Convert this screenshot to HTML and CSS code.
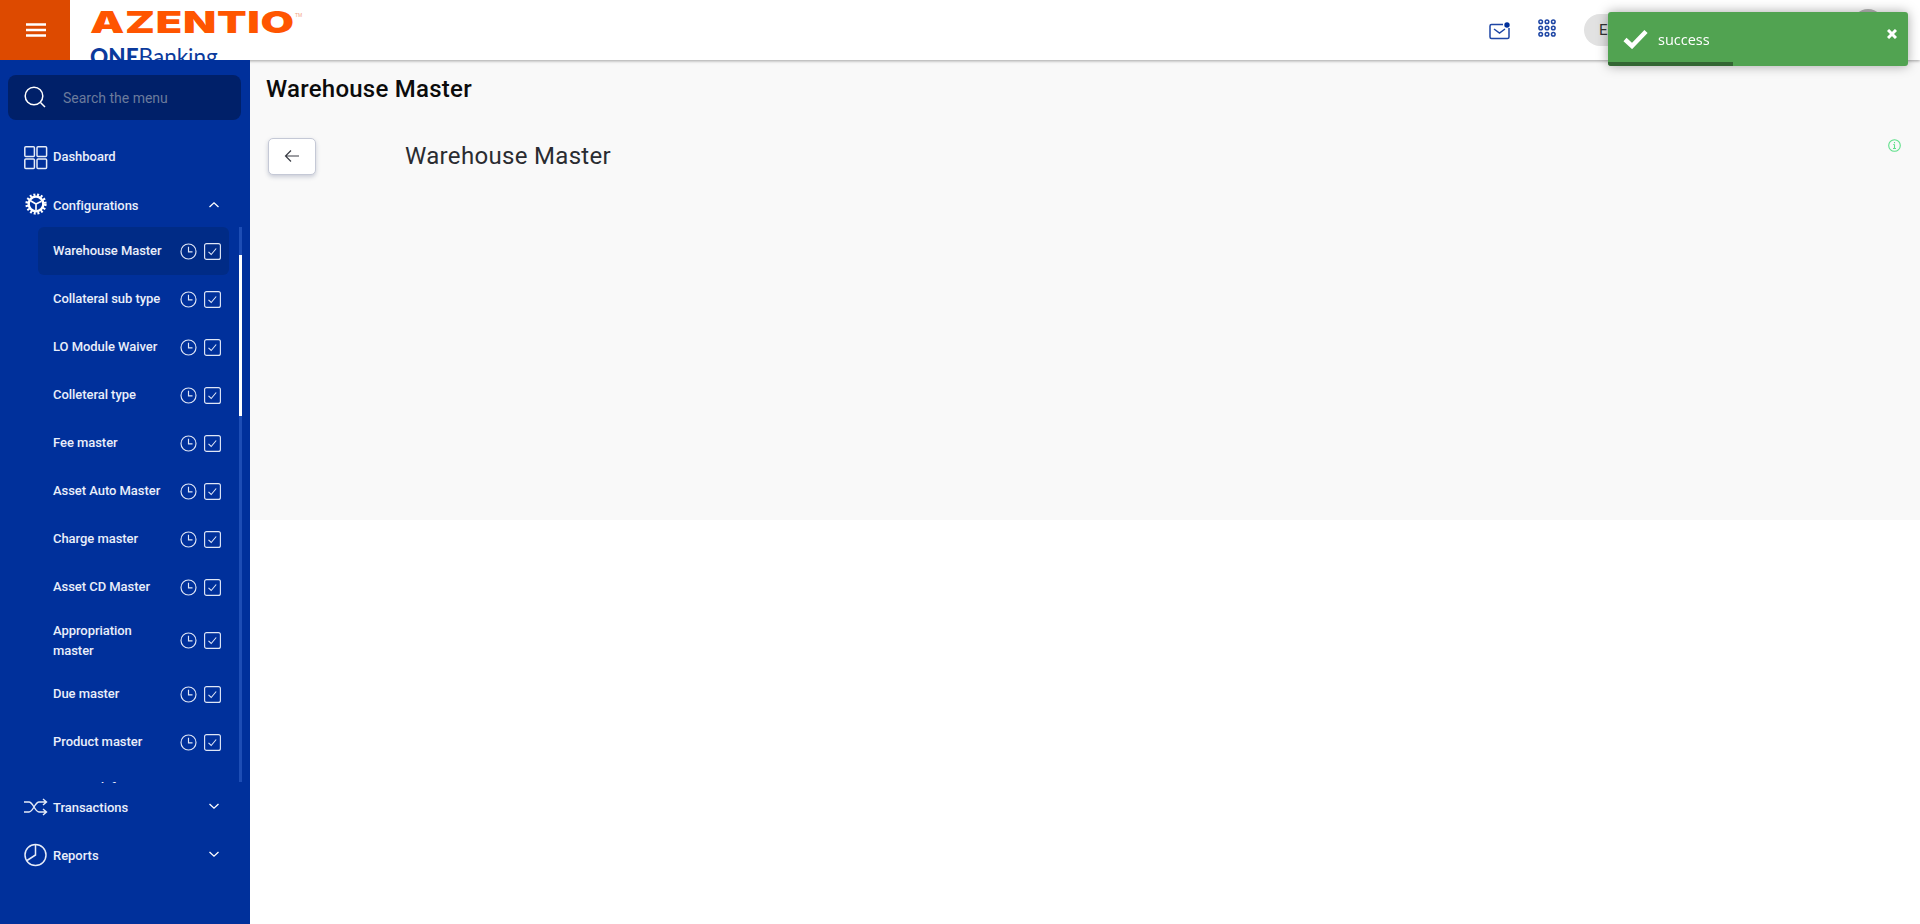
FILE: index.html
```html
<!DOCTYPE html>
<html lang="en">
<head>
<meta charset="utf-8">
<title>Warehouse Master</title>
<link rel="stylesheet" href="styles.css">
</head>
<body>
<svg class="sprite" aria-hidden="true">
  <symbol id="clock" viewBox="0 0 17 17"><circle cx="8.500" cy="8.500" r="7.500" fill="none" stroke="#dfe6f6" stroke-width="1.150"/><path d="M8.500 3.800v5h4" fill="none" stroke="#dfe6f6" stroke-width="1.150"/></symbol>
  <symbol id="check" viewBox="0 0 17 17"><rect x=".6" y=".6" width="15.800" height="15.800" rx="2" fill="none" stroke="#dfe6f6" stroke-width="1.150"/><path d="M4.500 8.800l2.700 2.700 5-6" fill="none" stroke="#dfe6f6" stroke-width="1.100"/></symbol>
</svg>
<header class="topbar">
  <button class="burger" aria-label="Menu">
    <svg width="20" height="14" viewBox="0 0 20 14"><path d="M0 1.500h20M0 7h20M0 12.500h20" stroke="#fff" stroke-width="2.500"/></svg>
  </button>
  <div class="brand">
    <div class="brand-main"><span class="brand-word">AZENTIO</span><span class="brand-tm">TM</span></div>
    <div class="brand-sub"><b>ONE</b>Banking</div>
  </div>
  <div class="top-actions">
    <svg class="ic-mail" width="22" height="20" viewBox="0 0 22 20" fill="none"><path d="M14 4.500H2.500A1.500 1.500 0 0 0 1 6v11a1.500 1.500 0 0 0 1.500 1.500h16A1.500 1.500 0 0 0 20 17V8" stroke="#1e46a5" stroke-width="1.500"/><path d="M5 9l5.500 4L16 9" stroke="#1e46a5" stroke-width="1.500"/><circle cx="18" cy="5" r="2.700" fill="#00309b"/></svg>
    <svg class="ic-grid" width="18" height="18" viewBox="0 0 20 20" fill="none" stroke="#1e46a5" stroke-width="1.700"><circle cx="3" cy="3" r="2"/><circle cx="10" cy="3" r="2"/><circle cx="17" cy="3" r="2"/><circle cx="3" cy="10" r="2"/><circle cx="10" cy="10" r="2"/><circle cx="17" cy="10" r="2"/><circle cx="3" cy="17" r="2"/><circle cx="10" cy="17" r="2"/><circle cx="17" cy="17" r="2"/></svg>
    <div class="lang">En</div>
    <div class="avatar"></div>
  </div>
</header>

<div class="shell">
  <aside class="sidebar">
    <div class="search">
      <svg width="22" height="23" viewBox="0 0 22 23" fill="none" stroke="#fff" stroke-width="1.500"><circle cx="10" cy="10" r="8.800"/><path d="M16.500 16.500l4.500 4.500"/></svg>
      <span>Search the menu</span>
    </div>
    <nav class="menu">
      <a class="top-item">
        <svg class="top-ic ic-dash" width="24" height="24" viewBox="0 0 24 24" fill="none" stroke="#e6ecf8" stroke-width="1.500"><rect x=".8" y=".8" width="9.600" height="9.600" rx="1"/><rect x="13" y=".8" width="9.600" height="9.600" rx="1"/><rect x=".8" y="13" width="9.600" height="9.600" rx="1"/><rect x="13" y="13" width="9.600" height="9.600" rx="1"/></svg>
        <span>Dashboard</span>
      </a>
      <a class="top-item open">
        <svg class="top-ic ic-gear" width="22" height="22" viewBox="0 0 24 24" fill="none" stroke="#fff"><circle cx="12" cy="12" r="8" stroke-width="2.600"/><circle cx="12" cy="12" r="10" stroke-width="3.200" stroke-dasharray="2.100 1.900"/><path d="M12 12L6 8.500M12 12l6-3M12 12v7" stroke-width="1.800"/></svg>
        <span>Configurations</span>
        <svg class="chev" width="12" height="8" viewBox="0 0 12 8" fill="none" stroke="#fff" stroke-width="1.300"><path d="M1.500 6L6 1.800 10.500 6"/></svg>
      </a>
      <div class="sub-wrap">
        <div class="sub">
          <a class="sub-item active"><span class="sub-label">Warehouse Master</span><span class="sub-ics"><svg width="17" height="17"><use href="#clock"/></svg><svg width="17" height="17"><use href="#check"/></svg></span></a>
          <a class="sub-item"><span class="sub-label">Collateral sub type</span><span class="sub-ics"><svg width="17" height="17"><use href="#clock"/></svg><svg width="17" height="17"><use href="#check"/></svg></span></a>
          <a class="sub-item"><span class="sub-label">LO Module Waiver</span><span class="sub-ics"><svg width="17" height="17"><use href="#clock"/></svg><svg width="17" height="17"><use href="#check"/></svg></span></a>
          <a class="sub-item"><span class="sub-label">Colleteral type</span><span class="sub-ics"><svg width="17" height="17"><use href="#clock"/></svg><svg width="17" height="17"><use href="#check"/></svg></span></a>
          <a class="sub-item"><span class="sub-label">Fee master</span><span class="sub-ics"><svg width="17" height="17"><use href="#clock"/></svg><svg width="17" height="17"><use href="#check"/></svg></span></a>
          <a class="sub-item"><span class="sub-label">Asset Auto Master</span><span class="sub-ics"><svg width="17" height="17"><use href="#clock"/></svg><svg width="17" height="17"><use href="#check"/></svg></span></a>
          <a class="sub-item"><span class="sub-label">Charge master</span><span class="sub-ics"><svg width="17" height="17"><use href="#clock"/></svg><svg width="17" height="17"><use href="#check"/></svg></span></a>
          <a class="sub-item"><span class="sub-label">Asset CD Master</span><span class="sub-ics"><svg width="17" height="17"><use href="#clock"/></svg><svg width="17" height="17"><use href="#check"/></svg></span></a>
          <a class="sub-item tall"><span class="sub-label">Appropriation<br>master</span><span class="sub-ics"><svg width="17" height="17"><use href="#clock"/></svg><svg width="17" height="17"><use href="#check"/></svg></span></a>
          <a class="sub-item"><span class="sub-label">Due master</span><span class="sub-ics"><svg width="17" height="17"><use href="#clock"/></svg><svg width="17" height="17"><use href="#check"/></svg></span></a>
          <a class="sub-item"><span class="sub-label">Product master</span><span class="sub-ics"><svg width="17" height="17"><use href="#clock"/></svg><svg width="17" height="17"><use href="#check"/></svg></span></a>
          <a class="sub-item cut"><span class="sub-label">Pricing definition</span></a>
        </div>
        <div class="scroll-track"><div class="scroll-thumb"></div></div>
      </div>
      <a class="top-item">
        <svg class="top-ic" width="24" height="20" viewBox="0 0 24 20" fill="none" stroke="#e6ecf8" stroke-width="1.400"><path d="M0 5h5c4 0 6 10 10 10h7M0 15h5c4 0 6-10 10-10h7M19 2l3.500 3L19 8M19 12l3.500 3-3.500 3"/></svg>
        <span>Transactions</span>
        <svg class="chev" width="12" height="8" viewBox="0 0 12 8" fill="none" stroke="#fff" stroke-width="1.300"><path d="M1.500 2L6 6.200 10.500 2"/></svg>
      </a>
      <a class="top-item">
        <svg class="top-ic" width="24" height="24" viewBox="0 0 24 24" fill="none" stroke="#e6ecf8" stroke-width="1.500"><circle cx="11.500" cy="12" r="10.500"/><path d="M11.500 1.500V12L3 17.500"/></svg>
        <span>Reports</span>
        <svg class="chev" width="12" height="8" viewBox="0 0 12 8" fill="none" stroke="#fff" stroke-width="1.300"><path d="M1.500 2L6 6.200 10.500 2"/></svg>
      </a>
    </nav>
  </aside>

  <main class="main">
    <section class="panel">
      <h1 class="page-title">Warehouse Master</h1>
      <div class="form-head">
        <button class="back" aria-label="Back">
          <svg width="16" height="14" viewBox="0 0 16 14" fill="none" stroke="#3a3d45" stroke-width="1.200"><path d="M15 7H1.500M7 1.500L1.500 7 7 12.500"/></svg>
        </button>
        <h2 class="form-title">Warehouse Master</h2>
        <svg class="info" width="13" height="13" viewBox="0 0 13 13" fill="none" stroke="#5fe08a" stroke-width="1.100"><circle cx="6.500" cy="6.500" r="5.800"/><path d="M6.500 5.500v4M5 9.500h3M5.300 5.500h1.200M6.500 3v1.200"/></svg>
      </div>
    </section>
  </main>
</div>

<div class="toast">
  <svg class="toast-check" width="25" height="20" viewBox="0 0 25 20" fill="none" stroke="#fff" stroke-width="4.500"><path d="M2 10.500l7 6.500L23 2.500"/></svg>
  <span class="toast-msg">success</span>
  <svg class="toast-close" width="10" height="10" viewBox="0 0 10 10" fill="none" stroke="#fff" stroke-width="3"><path d="M1 1l8 8M9 1l-8 8"/></svg>
  <div class="toast-progress"></div>
</div>
</body>
</html>
```

FILE: styles.css
```css
* { box-sizing: border-box; }
html, body { margin: 0; height: 100%; }
body { font-family: Roboto, "Liberation Sans", sans-serif; background: #fff; overflow: hidden; }
a { display: flex; }
button { border: 0; padding: 0; font: inherit; }
.sprite { display: none; }

.topbar { height: 60px; display: flex; align-items: flex-start; background: #fff; box-shadow: 0 1px 3px rgba(0,0,0,.35); position: relative; z-index: 1; overflow: hidden; }
.burger { width: 70px; height: 60px; padding-left: 1px; background: #dd4a00; display: flex; align-items: center; justify-content: center; flex: none; }
.brand { padding: 10px 0 0 20px; width: 300px; flex: none; }
.brand-main { display: flex; align-items: flex-start; height: 37px; }
.brand-word { font: 900 30px/24px Inter, "Liberation Sans", sans-serif; color: #ff5500; transform: scaleX(1.44); transform-origin: left top; width: 205px; letter-spacing: .5px; }
.brand-tm { font: 400 5px/6px "Liberation Sans", sans-serif; color: #f4a583; margin-top: 2px; }
.brand-sub { font: 400 22.500px/26px Lato, "Liberation Sans", sans-serif; color: #0b3a9c; margin-top: -3px; }
.brand-sub b { font-weight: 900; }
.top-actions { margin-left: auto; display: flex; align-items: center; height: 60px; padding-right: 40px; }
.ic-mail { margin-right: 27px; }
.ic-grid { margin-right: 28px; margin-top: -4px; }
.lang { width: 296px; height: 32px; padding-left: 15px; border-radius: 16px; background: #e2e2e2; color: #333; font-size: 15px; line-height: 32px; }
.avatar { position: absolute; right: 36px; top: 9px; width: 32px; height: 32px; border-radius: 50%; background: #b5b5b5; }

.shell { display: flex; height: 864px; }
.sidebar { width: 250px; flex: none; background: #00309b; padding: 15px 8px 0; position: relative; z-index: 2; }
.search { height: 45px; width: 233px; border-radius: 8px; background: #002069; display: flex; align-items: center; padding-left: 16px; color: #6b7b9c; font-size: 14px; }
.search span { margin-left: 17px; }
.menu { margin: 12px -8px 0; }
.top-item { height: 48px; align-items: center; padding-left: 24px; color: #e9eefa; font-size: 13px; font-weight: 500; letter-spacing: -.03px; position: relative; }
.top-item.open { height: 50px; margin-bottom: -3px; }
.top-ic { flex: none; margin-right: 5px; }
.ic-dash { margin-top: 3px; }
.ic-gear { margin: -2px 6px 0 1px; }
.chev { position: absolute; left: 208px; top: 50%; margin-top: -5px; }
.open .chev { margin-top: -4px; }
.sub-wrap { height: 556px; overflow: hidden; position: relative; }
.sub { padding-left: 38px; width: 229px; }
.sub-item { height: 48px; align-items: center; padding-left: 15px; padding-right: 8px; color: #e9eefa; font-size: 13px; font-weight: 500; letter-spacing: -.05px; line-height: 20px; border-radius: 6px; }
.sub-item.tall { height: 59px; }
.sub-item.cut { height: 59px; align-items: flex-start; padding-top: 12px; }
.sub-item.active { background: #002b86; }
.sub-label { flex: 1; white-space: nowrap; }
.sub-ics { display: flex; gap: 7px; flex: none; }
.scroll-track { position: absolute; left: 239px; top: 0; height: 555px; width: 3px; background: #1d4db5; }
.scroll-thumb { margin-top: 28px; height: 161px; background: #fff; }

.main { flex: 1; min-width: 0; }
.panel { height: 460px; background: #f9f9f9; padding: 14px 16px 0; }
.page-title { margin: 0; font-size: 24px; line-height: 30px; font-weight: 500; letter-spacing: .25px; color: #0c0c0c; }
.form-head { display: flex; align-items: center; margin: 33px 0 0 2px; position: relative; }
.back { width: 48px; height: 37px; background: #fff; border: 1px solid #c5c9d6; border-radius: 5px; box-shadow: 0 2px 4px rgba(60,70,110,.25); display: flex; align-items: center; justify-content: center; }
.form-title { margin: 1px 0 0 89px; font-size: 24px; font-weight: 400; letter-spacing: .32px; line-height: 37px; color: #2a2c31; }
.info { position: absolute; right: 3px; top: 2px; }

.toast { position: fixed; left: 1608px; top: 12px; width: 300px; height: 54px; background: #51a351; border-radius: 3px; box-shadow: 0 0 12px rgba(0,0,0,.35); z-index: 5; overflow: hidden; display: flex; align-items: center; color: #fff; font: 400 14.500px "Open Sans", "Liberation Sans", sans-serif; }
.toast-check { margin-left: 15px; flex: none; }
.toast-msg { margin-left: 10px; }
.toast-close { position: absolute; right: 11px; top: 17px; }
.toast-progress { position: absolute; left: 0; bottom: 0; height: 4px; width: 125px; background: #336633; }
```
